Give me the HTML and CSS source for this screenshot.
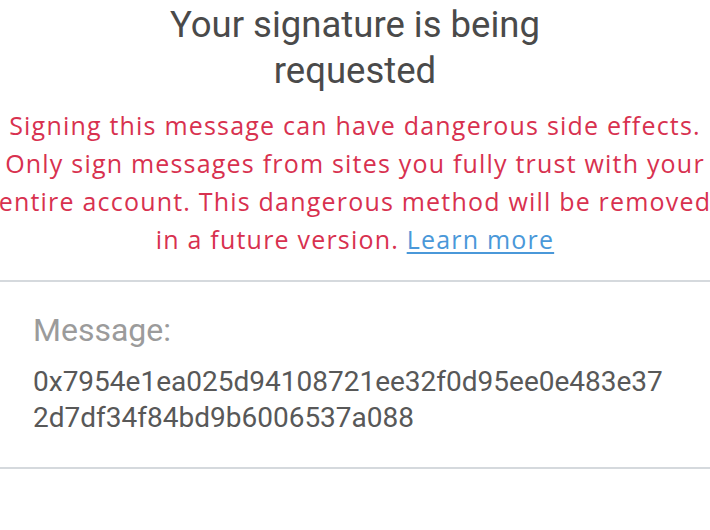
FILE: index.html
```html
<!DOCTYPE html>
<html>
<head>
<meta charset="utf-8">
<link rel="stylesheet" href="styles.css">
</head>
<body>
<div class="request">
  <h1 class="title">Your signature is being<br>requested</h1>
  <p class="warning">Signing this message can have dangerous side effects.<br>Only sign messages from sites you fully trust with your<br>entire account. This dangerous method will be removed<br>in a future version. <a class="learn" href="#">Learn more</a></p>
</div>
<div class="message">
  <div class="label">Message:</div>
  <div class="hex">0x7954e1ea025d94108721ee32f0d95ee0e483e37<br>2d7df34f84bd9b6006537a088</div>
</div>
</body>
</html>
```
FILE: styles.css
```css
html, body {
  margin: 0;
  padding: 0;
  background: #ffffff;
}
body {
  width: 710px;
  overflow: hidden;
}
.request {
  display: flex;
  flex-direction: column;
  align-items: center;
  padding-top: 2px;
  padding-bottom: 22px;
  border-bottom: 2px solid #d5d9dd;
}
.title {
  margin: 0;
  font-family: Roboto, sans-serif;
  font-weight: 400;
  font-size: 36.5px;
  line-height: 46px;
  color: #4a4a4a;
  text-align: center;
}
.warning {
  margin: 12px 0 0;
  font-family: "Open Sans", sans-serif;
  font-size: 25px;
  letter-spacing: 1.2px;
  line-height: 38px;
  color: #d8314f;
  text-align: center;
  white-space: nowrap;
}
.learn {
  color: #4a98d9;
  text-decoration: underline;
  text-underline-offset: 3px;
}
.message {
  padding: 28px 33px 31px;
  border-bottom: 2px solid #d5d9dd;
  font-family: Roboto, sans-serif;
}
.label {
  font-size: 32px;
  line-height: 40px;
  color: #9b9b9b;
}
.hex {
  margin-top: 14px;
  font-size: 28px;
  line-height: 36px;
  color: #585858;
}
```
